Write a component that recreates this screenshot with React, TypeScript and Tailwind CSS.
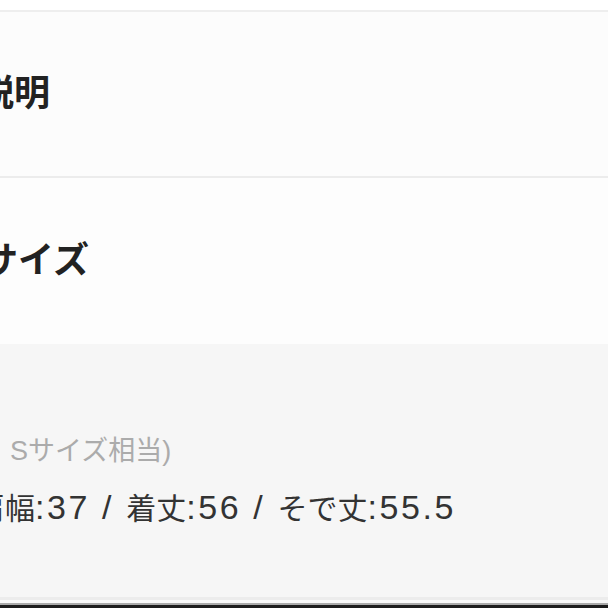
import React from "react";

const jp = { fontFamily: '"Liberation Sans", "Noto Sans CJK JP", sans-serif' };

function Latin({ children }: { children: React.ReactNode }) {
  return <span className="text-[34px] tracking-[2.6px]">{children}</span>;
}

export default function App() {
  return (
    <div className="w-[608px] h-[608px] overflow-hidden bg-white flex flex-col" style={jp}>
      <div className="h-[10px] bg-white shrink-0" />
      <div className="h-[2px] bg-[#eeeeee] shrink-0" />
      <section className="h-[164px] shrink-0 bg-[#fcfcfc] flex items-center">
        <h2 className="ml-[-22px] text-[36px] leading-none font-bold text-[#222222] whitespace-nowrap">説明</h2>
      </section>
      <div className="h-[2px] bg-[#ececec] shrink-0" />
      <section className="h-[166px] shrink-0 bg-[#fdfdfd] flex items-center">
        <h2 className="ml-[-18px] text-[36px] leading-none font-bold text-[#222222] whitespace-nowrap">サイズ</h2>
      </section>
      <section className="h-[253px] shrink-0 bg-[#f6f6f6] pt-[91px] overflow-hidden">
        <p className="ml-[10px] text-[27px] leading-[32px] text-[#ababab] whitespace-nowrap">Sサイズ相当)</p>
        <p className="mt-[22px] ml-[-25px] text-[30px] leading-[36px] text-[#333333] whitespace-nowrap">
          肩幅<Latin>:37 / </Latin>着丈<Latin>:56 / </Latin>そで丈<Latin>:55.5</Latin>
        </p>
      </section>
      <div className="h-[3px] bg-[#ececec] shrink-0" />
      <div className="h-[3px] bg-[#f8f8f8] shrink-0" />
      <div className="h-[2px] bg-[#aaaaaa] shrink-0" />
      <div className="flex-1 bg-[#1c1c1c]" />
    </div>
  );
}
